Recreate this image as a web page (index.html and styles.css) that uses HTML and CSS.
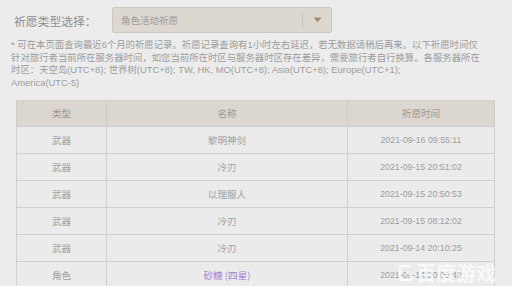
FILE: index.html
```html
<!DOCTYPE html>
<html lang="zh-CN">
<head>
<meta charset="utf-8">
<title>祈愿记录</title>
<link rel="stylesheet" href="styles.css">
</head>
<body>
<div class="page">
  <div class="filter">
    <span class="filter-label">祈愿类型选择：</span>
    <div class="select">
      <span class="select-text">角色活动祈愿</span>
      <span class="select-divider"></span>
      <span class="select-arrow">
        <svg width="9" height="6" viewBox="0 0 9 6"><path d="M0.5 0.5 L8.5 0.5 L4.5 5.5 Z" fill="#a48b72"/></svg>
      </span>
    </div>
  </div>
  <p class="notes">* 可在本页面查询最近6个月的祈愿记录。祈愿记录查询有1小时左右延迟，若无数据请稍后再来。以下祈愿时间仅<br>针对旅行者当前所在服务器时间，如您当前所在时区与服务器时区存在差异，需要旅行者自行换算。各服务器所在<br>时区：天空岛(UTC+8); 世界树(UTC+8); TW, HK, MO(UTC+8); Asia(UTC+8); Europe(UTC+1);<br>America(UTC-5)</p>
  <table class="log">
    <colgroup><col class="c-type"><col class="c-name"><col class="c-time"></colgroup>
    <thead>
      <tr><th>类型</th><th>名称</th><th>祈愿时间</th></tr>
    </thead>
    <tbody>
      <tr><td>武器</td><td>黎明神剑</td><td class="time">2021-09-16 09:55:11</td></tr>
      <tr><td>武器</td><td>冷刃</td><td class="time">2021-09-15 20:51:02</td></tr>
      <tr><td>武器</td><td>以理服人</td><td class="time">2021-09-15 20:50:53</td></tr>
      <tr><td>武器</td><td>冷刃</td><td class="time">2021-09-15 08:12:02</td></tr>
      <tr><td>武器</td><td>冷刃</td><td class="time">2021-09-14 20:10:25</td></tr>
      <tr><td>角色</td><td class="four-star">砂糖 (四星)</td><td class="time">2021-09-14 20:09:42</td></tr>
    </tbody>
  </table>
  <div class="watermark">
    <svg class="wm-logo" width="15" height="18" viewBox="0 0 15 18"><path d="M13 2 H4 Q2 2 2 4 V14 Q2 16 4 16 H12 Q13 16 13 15 V9 H8" fill="none" stroke="#ffffff" stroke-width="2.6" stroke-linejoin="round"/></svg>
    <span class="wm-text">百度游戏</span>
  </div>
</div>
</body>
</html>
```
FILE: styles.css
```css
html, body {
  margin: 0;
  padding: 0;
}
body {
  background: #ececec;
  font-family: "Noto Sans CJK SC", "Noto Sans CJK JP", sans-serif;
}
.page {
  position: relative;
  box-sizing: border-box;
  width: 512px;
  height: 286px;
  overflow: hidden;
  padding: 7px 0 0 11px;
}
.filter {
  display: flex;
  align-items: center;
  height: 26px;
}
.filter-label {
  width: 98px;
  padding-left: 3px;
  font-size: 11.8px;
  color: #8f8f8f;
}
.select {
  box-sizing: border-box;
  width: 220px;
  height: 26px;
  display: flex;
  align-items: center;
  background: #dcd7cf;
  border: 1px solid #cdc7be;
  border-radius: 2px;
  padding-left: 8px;
}
.select-text {
  flex: 1;
  font-size: 9.5px;
  color: #a39c93;
}
.select-divider {
  width: 1px;
  height: 15px;
  background: #c8c2b9;
}
.select-arrow {
  width: 28px;
  display: flex;
  justify-content: center;
  align-items: center;
}
.notes {
  margin: 6px 0 0;
  white-space: nowrap;
  font-family: "Liberation Sans", "Noto Sans CJK SC", sans-serif;
  font-size: 9.4px;
  line-height: 12.7px;
  color: #9c9c9c;
}
.log {
  margin: 10px 0 0 5px;
  width: 478px;
  border-collapse: collapse;
  table-layout: fixed;
  border: 1px solid #d4d0ca;
  font-size: 9.6px;
  color: #a2a2a2;
}
.c-type { width: 90px; }
.c-name { width: 241px; }
.c-time { width: 147px; }
.log th {
  height: 25px;
  padding: 0;
  background: #dbd7d0;
  font-weight: normal;
  color: #9d9992;
  border-left: 1px solid #d0ccc5;
  border-right: 1px solid #d0ccc5;
}
.log td {
  height: 26px;
  padding: 0;
  text-align: center;
  background: #ebebeb;
  border: 1px solid #cfcfcf;
}
.log td.time {
  font-family: "Liberation Sans", sans-serif;
  font-size: 8.8px;
  color: #9e9e9e;
}
.log td.four-star {
  color: #a57fd6;
}
.watermark {
  position: absolute;
  left: 398px;
  top: 261px;
  display: flex;
  align-items: center;
  gap: 3px;
  opacity: 0.7;
}
.wm-text {
  font-size: 20px;
  line-height: 24px;
  font-weight: bold;
  color: #ffffff;
}
```
